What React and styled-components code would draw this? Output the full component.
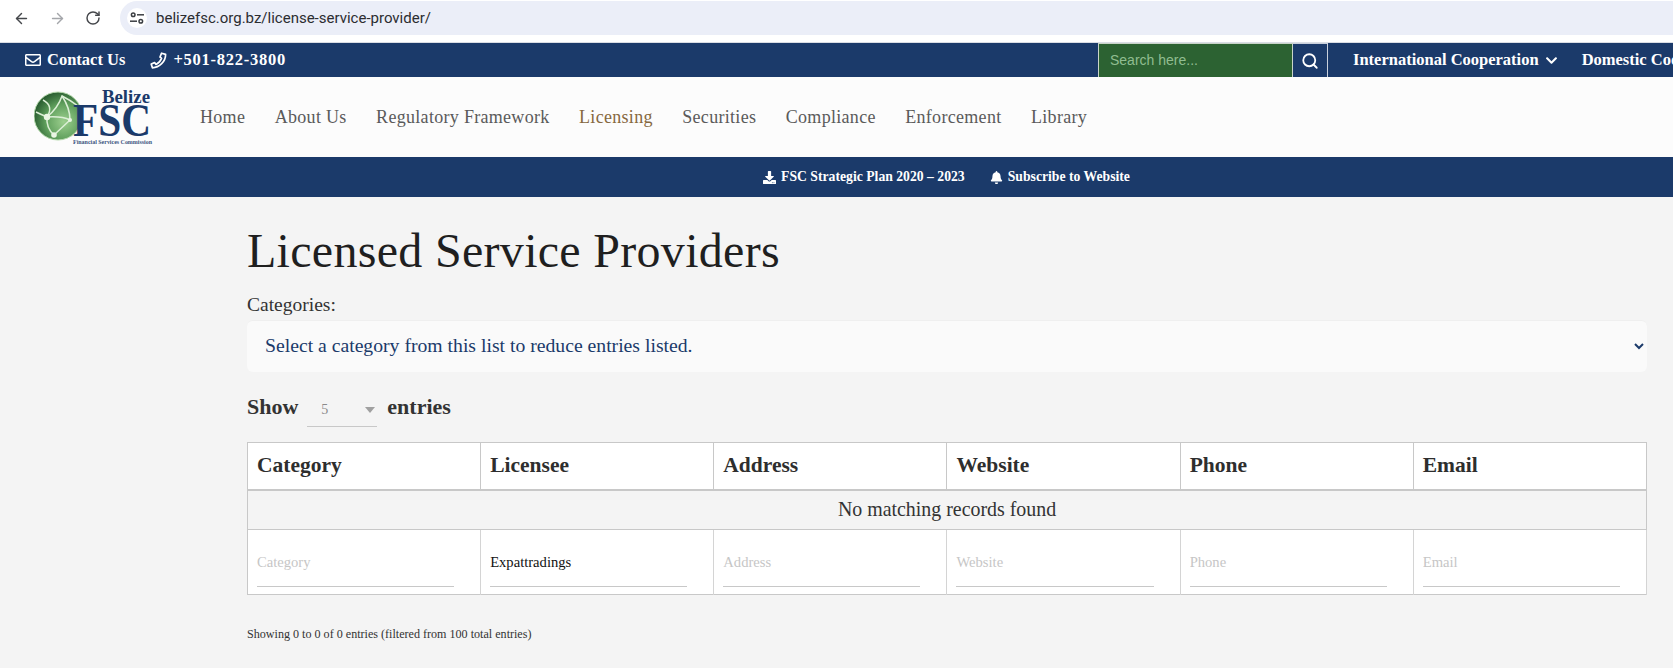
import React from 'react';
import styled, { createGlobalStyle } from 'styled-components';
import { ArrowLeft, ArrowRight, RotateCw, Search } from 'lucide-react';
import { FaRegEnvelope, FaDownload, FaBell, FaChevronDown } from 'react-icons/fa';

const serif = '"Liberation Serif", Georgia, serif';
const navy = '#1b3a6a';

const GlobalStyle = createGlobalStyle`
  html, body {
    margin: 0;
    height: 100%;
    overflow: hidden;
    background: #f4f4f4;
    font-family: ${serif};
  }
  * { box-sizing: border-box; }
`;

const Page = styled.div`
  width: 1673px;
  height: 668px;
  overflow: hidden;
`;

const BrowserBar = styled.div`
  height: 42px;
  background: #fff;
  display: flex;
  align-items: flex-start;
  padding: 1px 0 0 12px;
`;

const BrowserButton = styled.div`
  width: 18px;
  height: 34px;
  margin-right: 18px;
  display: flex;
  align-items: center;
  justify-content: center;
  color: ${p => (p.$muted ? '#a4a6aa' : '#45474b')};
`;

const UrlPill = styled.div`
  flex: 1;
  height: 34px;
  background: #ebeef8;
  border-radius: 17px 0 0 17px;
  display: flex;
  align-items: center;
  padding-left: 7px;
  font: 15px Roboto, sans-serif;
  color: #2b2d31;
`;

const TuneBadge = styled.div`
  width: 20px;
  height: 20px;
  margin-right: 9px;
  border-radius: 50%;
  background: #fff;
  display: flex;
  align-items: center;
  justify-content: center;
`;

const TopBar = styled.div`
  height: 35px;
  background: ${navy};
  display: flex;
  align-items: stretch;
  color: #fff;
  font-size: 16.5px;
  white-space: nowrap;
  border-top: 1px solid #d9dde4;
`;

const TopLeft = styled.div`
  flex: 0 0 1098px;
  display: flex;
  align-items: center;
  gap: 25px;
  padding-left: 25px;
`;

const TopLink = styled.span`
  display: flex;
  align-items: center;
  gap: 6px;
  font-weight: 700;
  letter-spacing: ${p => (p.$wide ? '0.75px' : '0')};
`;

const SearchInput = styled.input`
  flex: 0 0 195px;
  width: 195px;
  min-width: 0;
  background: #2c6232;
  border: 1px solid #c9d4c9;
  border-bottom-width: 0;
  padding: 0 11px 2px;
  font: 14px "Liberation Sans", sans-serif;
  color: #fff;
  outline: none;
  &::placeholder { color: #90bd90; opacity: 1; }
`;

const SearchButton = styled.div`
  flex: 0 0 35px;
  border: 1px solid #c9d0dc;
  border-left: 0;
  border-bottom-width: 0;
  display: flex;
  align-items: center;
  justify-content: center;
`;

const TopRight = styled.div`
  display: flex;
  align-items: center;
  gap: 24px;
  padding-left: 25px;
`;

const NavBar = styled.div`
  height: 80px;
  background: #fcfcfc;
  display: flex;
  align-items: center;
  padding-left: 34px;
`;

const NavLinks = styled.nav`
  display: flex;
  gap: 29.5px;
  margin-left: 46px;
  margin-top: 1px;
`;

const NavLink = styled.a`
  font-size: 18px;
  letter-spacing: 0.3px;
  color: ${p => (p.$active ? '#86683f' : '#5a5a5a')};
`;

const NoticeBar = styled.div`
  height: 40px;
  background: ${navy};
  color: #fff;
  display: flex;
  align-items: center;
  justify-content: center;
  gap: 25px;
  font-size: 13.7px;
  font-weight: 700;
  padding-left: 220px;
`;

const Notice = styled.span`
  display: flex;
  align-items: center;
  gap: 5px;
`;

const Content = styled.main`
  padding: 27px 26px 0 247px;
  color: #2b2b2b;
`;

const Title = styled.h1`
  margin: 0;
  font-size: 48px;
  font-weight: 400;
  line-height: 54px;
  color: #1f1f1f;
  letter-spacing: 0.3px;
`;

const FieldLabel = styled.label`
  display: block;
  margin-top: 16px;
  font-size: 19.5px;
  line-height: 22px;
  color: #333;
`;

const CategorySelect = styled.select`
  display: block;
  width: 100%;
  height: 52px;
  margin-top: 4px;
  padding: 0 14px 3px;
  background: #fafafa;
  border: 0;
  border-top: 1px solid #efefef;
  border-radius: 6px;
  font: 19.7px ${serif};
  color: ${navy};
  outline: none;
`;

const LengthRow = styled.div`
  display: flex;
  align-items: center;
  height: 52px;
  margin-top: 9px;
  font-size: 22px;
  font-weight: 700;
  color: #333;
`;

const LengthPicker = styled.div`
  width: 70px;
  height: 34px;
  margin: 6px 10px 0 9px;
  border-bottom: 1px solid #c8c8c8;
  display: flex;
  align-items: center;
  justify-content: space-between;
  padding: 0 2px 0 14px;
  font-size: 14px;
  font-weight: 400;
  color: #8b8b8b;
`;

const Caret = styled.span`
  width: 0;
  height: 0;
  border-left: 5px solid transparent;
  border-right: 5px solid transparent;
  border-top: 6px solid #a0a0a0;
`;

const Table = styled.table`
  width: 100%;
  margin-top: 9px;
  border-collapse: collapse;
  table-layout: fixed;
  border: 1px solid #c8c8c8;
`;

const HeadCell = styled.th`
  height: 47px;
  padding: 0 9px;
  background: #fff;
  text-align: left;
  font-size: 21.5px;
  font-weight: 700;
  color: #2e2e2e;
  border-right: 1px solid #c8c8c8;
  border-bottom: 2px solid #c8c8c8;
`;

const EmptyCell = styled.td`
  height: 40px;
  text-align: center;
  font-size: 19.9px;
  color: #333;
  background: #f4f4f4;
  border-bottom: 1px solid #c8c8c8;
`;

const FilterCell = styled.td`
  height: 65px;
  padding: 0 26px 7px 9px;
  background: #fff;
  vertical-align: bottom;
  border-right: 1px solid #d4d4d4;
`;

const FilterInput = styled.input`
  display: block;
  width: 100%;
  height: 40px;
  padding: 0 0 9px;
  border: 0;
  border-bottom: 1px solid #c8c8c8;
  background: transparent;
  font: 14.6px ${serif};
  color: #111;
  outline: none;
  &::placeholder { color: #c6c6c6; opacity: 1; }
`;

const TableInfo = styled.div`
  margin-top: 32px;
  font-size: 12.1px;
  color: #333;
`;

const Logo = () => (
  <svg width="120" height="58" viewBox="0 0 120 58">
    <defs>
      <radialGradient id="globe" cx="62%" cy="62%" r="68%">
        <stop offset="0%" stopColor="#9ccf8e" />
        <stop offset="55%" stopColor="#5f9f5c" />
        <stop offset="100%" stopColor="#23552b" />
      </radialGradient>
    </defs>
    <circle cx="24" cy="28" r="24" fill="url(#globe)" stroke="#b9dcb0" strokeWidth="1" />
    <g fill="none" stroke="#dcefd6" strokeWidth="1.5">
      <path d="M9 12 Q 20 18 13 29 Q 12 40 20 47" />
      <path d="M13 29 Q 24 20 28 8 Q 36 12 44 18" />
      <path d="M13 29 Q 28 28 36 32 L20 47" />
      <path d="M28 8 Q 36 20 36 32" />
      <path d="M2 24 Q 6 26 13 29" />
    </g>
    <circle cx="13" cy="29" r="3.2" fill="#eaf5e4" />
    <circle cx="20" cy="47" r="2.8" fill="#eaf5e4" />
    <circle cx="36" cy="32" r="2" fill="#eaf5e4" />
    <text x="116" y="15" textAnchor="end" fontFamily="Liberation Serif" fontWeight="700" fontSize="18" textLength="48" lengthAdjust="spacingAndGlyphs" fill={navy}>Belize</text>
    <text x="117" y="48" textAnchor="end" fontFamily="Liberation Serif" fontWeight="700" fontSize="46" textLength="78" lengthAdjust="spacingAndGlyphs" fill={navy}>FSC</text>
    <text x="118" y="56" textAnchor="end" fontFamily="Liberation Serif" fontWeight="700" fontSize="6" textLength="79" lengthAdjust="spacingAndGlyphs" fill="#3b5580">Financial Services Commission</text>
  </svg>
);

const PhoneLine = () => (
  <svg width="17" height="17" viewBox="0 0 17 17" fill="none" stroke="#fff" strokeWidth="1.7" strokeLinejoin="round">
    <path d="M11.6 1.2 L15.6 2.4 C15.6 9.5 9.5 15.6 2.4 15.8 L1.2 12 L4.6 10.6 L6 12.4 C8.6 11.2 10.6 9 11.6 6.3 L10 5 Z" />
  </svg>
);

const TuneIcon = () => (
  <svg width="14" height="12" viewBox="0 0 14 12" fill="none" stroke="#3c3f43" strokeWidth="1.5">
    <circle cx="3.2" cy="2.8" r="1.8" />
    <path d="M7 2.8 H14" />
    <circle cx="10.8" cy="9.2" r="1.8" />
    <path d="M0 9.2 H7" />
  </svg>
);

const columns = ['Category', 'Licensee', 'Address', 'Website', 'Phone', 'Email'];

export default function App() {
  return (
    <Page>
      <GlobalStyle />
      <BrowserBar>
        <BrowserButton><ArrowLeft size={17} strokeWidth={2} /></BrowserButton>
        <BrowserButton $muted><ArrowRight size={17} strokeWidth={2} /></BrowserButton>
        <BrowserButton><RotateCw size={16} strokeWidth={2.2} /></BrowserButton>
        <UrlPill>
          <TuneBadge><TuneIcon /></TuneBadge>
          belizefsc.org.bz/license-service-provider/
        </UrlPill>
      </BrowserBar>
      <TopBar>
        <TopLeft>
          <TopLink><FaRegEnvelope size={16} />Contact Us</TopLink>
          <TopLink $wide><PhoneLine />+501-822-3800</TopLink>
        </TopLeft>
        <SearchInput placeholder="Search here..." />
        <SearchButton><Search size={18} color="#fff" strokeWidth={2.4} /></SearchButton>
        <TopRight>
          <TopLink>International Cooperation <FaChevronDown size={13} /></TopLink>
          <TopLink>Domestic Cooperation</TopLink>
        </TopRight>
      </TopBar>
      <NavBar>
        <Logo />
        <NavLinks>
          <NavLink>Home</NavLink>
          <NavLink>About Us</NavLink>
          <NavLink>Regulatory Framework</NavLink>
          <NavLink $active>Licensing</NavLink>
          <NavLink>Securities</NavLink>
          <NavLink>Compliance</NavLink>
          <NavLink>Enforcement</NavLink>
          <NavLink>Library</NavLink>
        </NavLinks>
      </NavBar>
      <NoticeBar>
        <Notice><FaDownload size={13} />FSC Strategic Plan 2020 – 2023</Notice>
        <Notice><FaBell size={13} />Subscribe to Website</Notice>
      </NoticeBar>
      <Content>
        <Title>Licensed Service Providers</Title>
        <FieldLabel>Categories:</FieldLabel>
        <CategorySelect>
          <option>Select a category from this list to reduce entries listed.</option>
        </CategorySelect>
        <LengthRow>
          Show
          <LengthPicker>5<Caret /></LengthPicker>
          entries
        </LengthRow>
        <Table>
          <thead>
            <tr>{columns.map(c => <HeadCell key={c}>{c}</HeadCell>)}</tr>
          </thead>
          <tbody>
            <tr><EmptyCell colSpan={6}>No matching records found</EmptyCell></tr>
            <tr>
              {columns.map(c => (
                <FilterCell key={c}>
                  {c === 'Licensee'
                    ? <FilterInput defaultValue="Expattradings" />
                    : <FilterInput placeholder={c} />}
                </FilterCell>
              ))}
            </tr>
          </tbody>
        </Table>
        <TableInfo>Showing 0 to 0 of 0 entries (filtered from 100 total entries)</TableInfo>
      </Content>
    </Page>
  );
}
